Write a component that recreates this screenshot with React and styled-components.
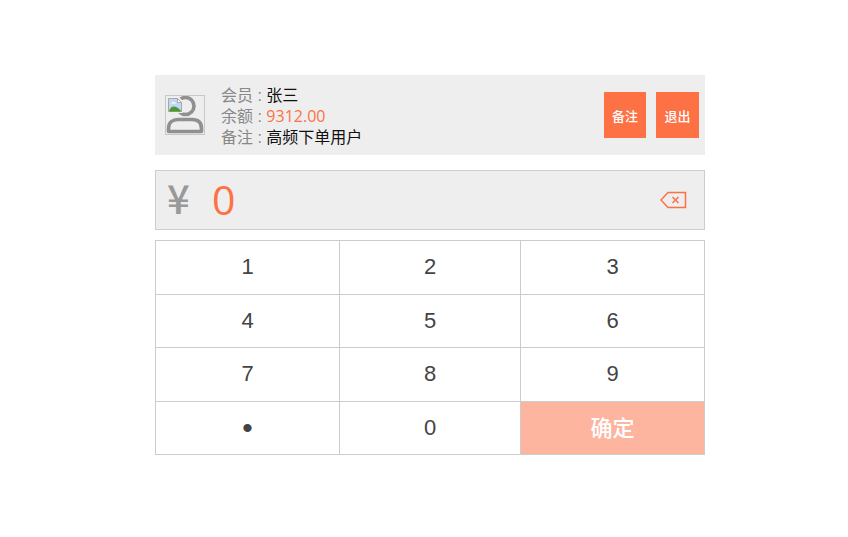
import React from "react";
import styled, { createGlobalStyle } from "styled-components";

const Global = createGlobalStyle`
  html, body { margin: 0; padding: 0; background: #fff; }
  body { font-family: "Liberation Sans", "Noto Sans CJK SC", sans-serif; }
`;
const Page = styled.div`
  width: 550px;
  padding: 75px 0 0 155px;
  display: flex;
  flex-direction: column;
`;
const Member = styled.div`
  height: 80px;
  background: #eee;
  display: flex;
  align-items: center;
  padding-left: 10px;
  padding-right: 6px;
`;
const Avatar = styled.div`
  position: relative;
  box-sizing: border-box;
  width: 40px;
  height: 40px;
  border: 1px solid #c8c8c8;
  flex: none;
`;
const PersonIcon = styled.svg`
  display: block;
  width: 38px;
  height: 38px;
`;
const BrokenIcon = styled.svg`
  position: absolute;
  left: 1px;
  top: 1px;
  width: 16px;
  height: 16px;
`;
const Info = styled.div`
  margin-left: 16px;
  padding-top: 3px;
  flex: 1;
  font-size: 16px;
  line-height: 21px;
  color: #888;
`;
const InfoRow = styled.div`
  white-space: nowrap;
`;
const Value = styled.span`
  color: ${p => (p.$accent ? "#fd7145" : "#111")};
  ${p => p.$accent && `font-family: "Open Sans", sans-serif;`}
`;
const ActionButton = styled.button`
  box-sizing: border-box;
  width: ${p => p.$w}px;
  height: 46px;
  margin-left: 10px;
  padding: 0;
  border: 0;
  background: #fd7145;
  color: #fff;
  font: 500 13px "Noto Sans CJK SC", sans-serif;
`;
const Amount = styled.div`
  box-sizing: border-box;
  height: 60px;
  margin-top: 15px;
  background: #eee;
  border: 1px solid #ccc;
  display: flex;
  align-items: center;
  padding: 0 17px 0 11px;
`;
const Currency = styled.span`
  font: 500 40px/1 "Noto Sans CJK SC", sans-serif;
  color: #999;
  width: 45px;
  padding-bottom: 7px;
`;
const Digits = styled.span`
  flex: 1;
  font: 41px/1 "Open Sans", sans-serif;
  color: #fd7145;
  padding-bottom: 2px;
`;
const Keypad = styled.div`
  box-sizing: border-box;
  margin-top: 10px;
  height: 215px;
  border-top: 1px solid #ccc;
  border-left: 1px solid #ccc;
  display: grid;
  grid-template-columns: 184px 181px 184px;
  grid-template-rows: 54px 53px 54px 53px;
`;
const Key = styled.div`
  box-sizing: border-box;
  display: flex;
  align-items: center;
  justify-content: center;
  padding-bottom: ${p => (p.$confirm ? "4px" : p.$dot ? "0" : "1px")};
  border-right: 1px solid #ccc;
  border-bottom: 1px solid #ccc;
  font-size: ${p => (p.$dot ? "30px" : "22px")};
  font-weight: ${p => (p.$confirm ? 500 : 400)};
  color: ${p => (p.$confirm ? "#fff" : "#444")};
  background: ${p => (p.$confirm ? "#fdb5a0" : "#fff")};
  ${p => p.$confirm && `font-family: "Noto Sans CJK SC", sans-serif;`}
`;

const keys = ["1","2","3","4","5","6","7","8","9","•","0"];

export default function App() {
  return (
    <Page>
      <Global />
      <Member>
        <Avatar>
          <PersonIcon viewBox="0 0 38 38" fill="none" stroke="#909090" strokeWidth="3.600">
            <circle cx="19.500" cy="10" r="8.500" />
            <path d="M2.500 35.500v-3c0-6 4-9 9.500-9h14c6 0 9.500 3 9.500 9v3z" strokeLinejoin="round" />
          </PersonIcon>
          <BrokenIcon viewBox="0 0 16 16">
            <path d="M0 0h12l4 4v12H0z" fill="#eee" />
            <path d="M1.500 1.500h9l4 4v9h-13z" fill="#c3d6f4" stroke="#a8a8a8" />
            <path d="M4 6.500c1-2 4-2 5 0z" fill="#fff" />
            <path d="M2 14.500c1-5 5-6 8-4 2 1 3 2 4.500 4z" fill="#4c9a2e" />
            <path d="M10.500 1.500v4h4z" fill="#fff" stroke="#a8a8a8" />
          </BrokenIcon>
        </Avatar>
        <Info>
          <InfoRow>会员 : <Value>张三</Value></InfoRow>
          <InfoRow>余额 : <Value $accent>9312.00</Value></InfoRow>
          <InfoRow>备注 : <Value>高频下单用户</Value></InfoRow>
        </Info>
        <ActionButton $w={42}>备注</ActionButton>
        <ActionButton $w={43}>退出</ActionButton>
      </Member>
      <Amount>
        <Currency>¥</Currency>
        <Digits>0</Digits>
        <svg width="27" height="18" viewBox="0 0 27 18" fill="none" stroke="#fd7145" strokeWidth="1.500">
          <path d="M8 1.500h17.500v15H8L1 9z" />
          <path d="M12.500 6l6 6M18.500 6l-6 6" />
        </svg>
      </Amount>
      <Keypad>
        {keys.map(k => <Key key={k} $dot={k === "•"}>{k}</Key>)}
        <Key $confirm>确定</Key>
      </Keypad>
    </Page>
  );
}
